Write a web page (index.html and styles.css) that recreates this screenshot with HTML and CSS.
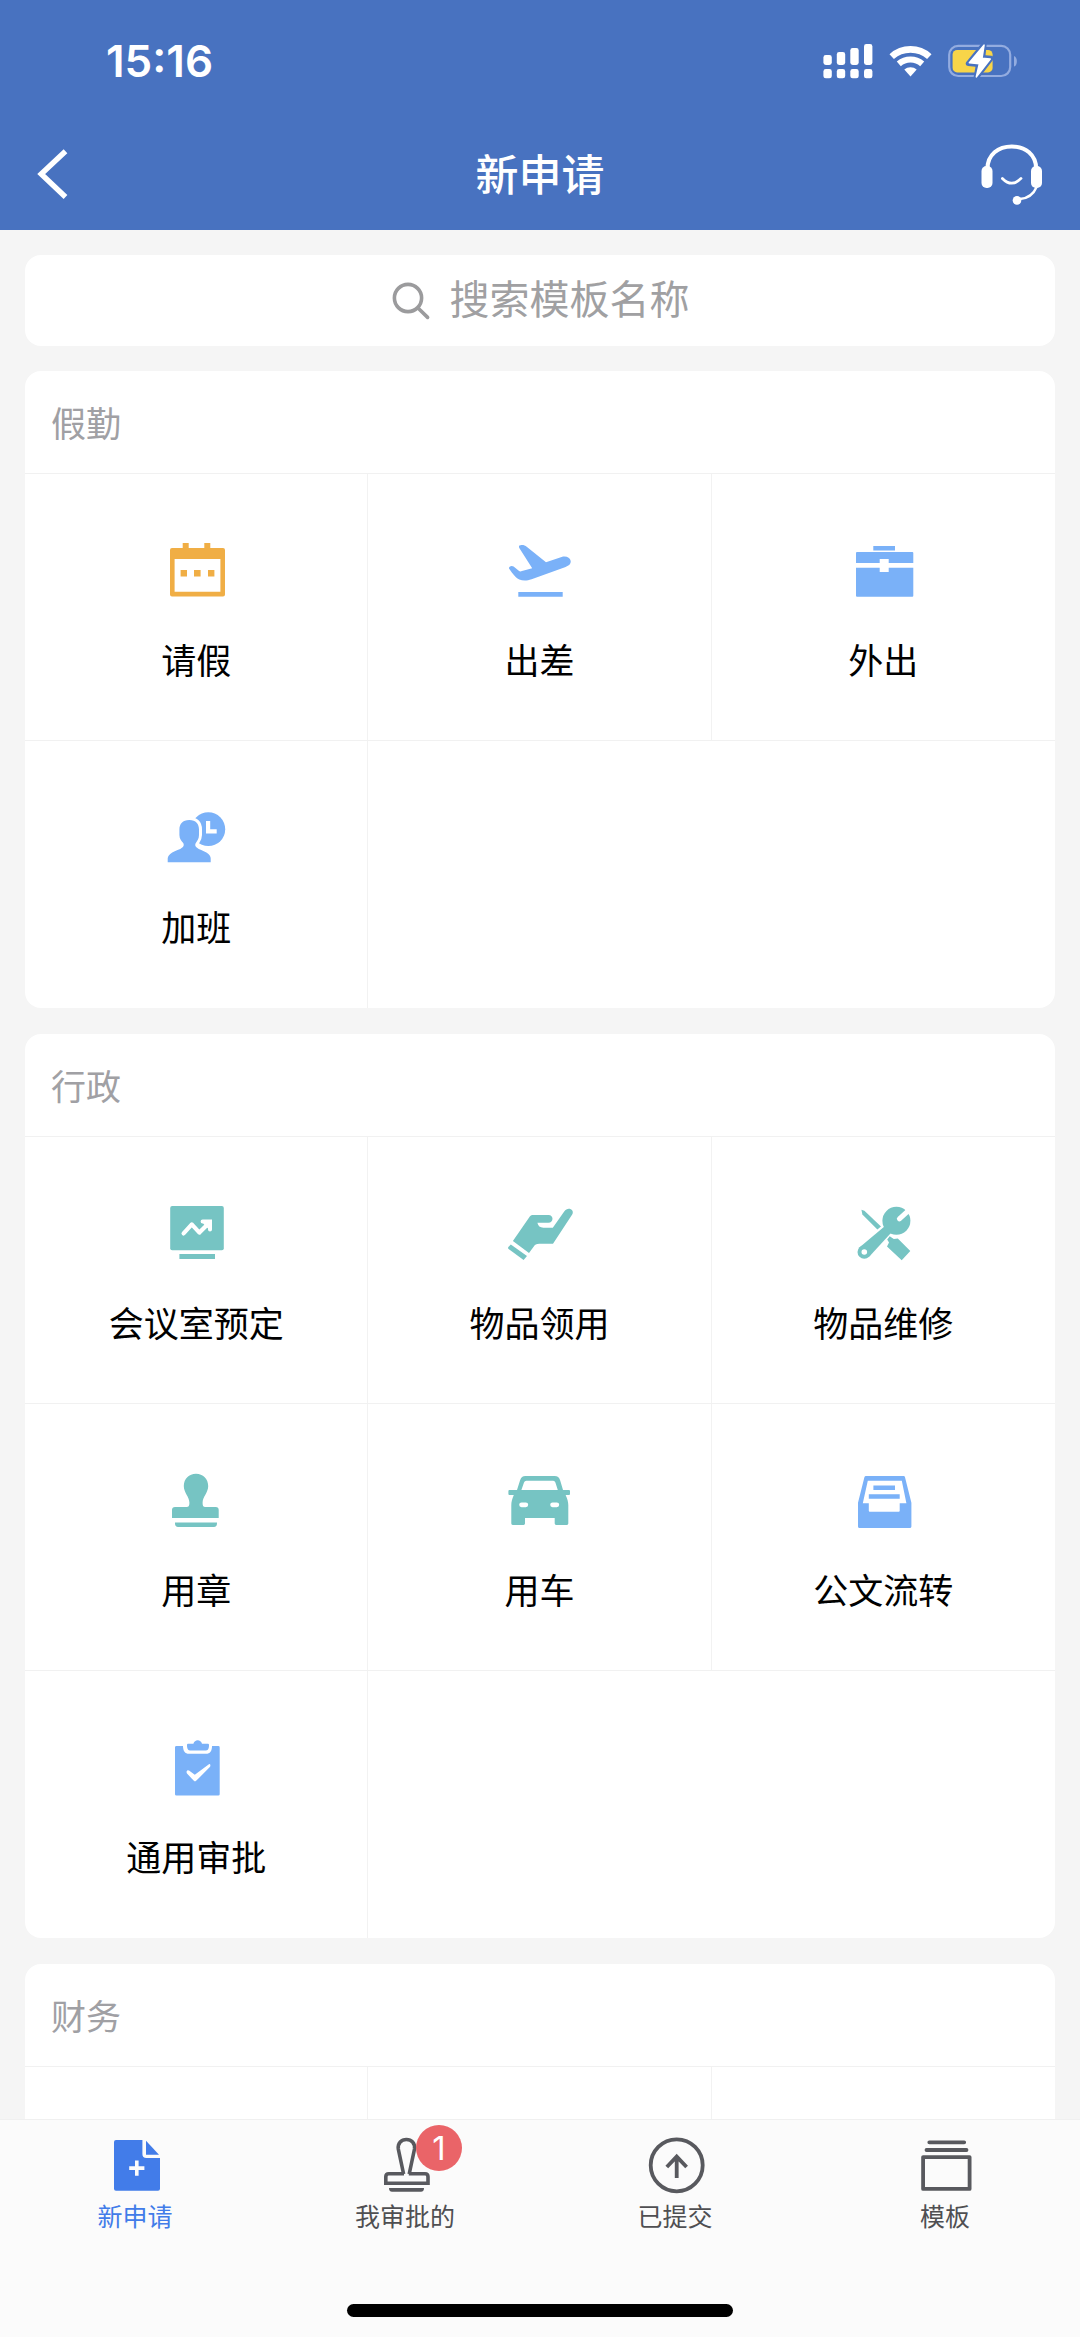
FILE: index.html
```html
<!DOCTYPE html>
<html lang="zh-CN">
<head>
<meta charset="utf-8">
<meta name="viewport" content="width=device-width, initial-scale=1">
<title>新申请</title>
<link rel="stylesheet" href="styles.css">
</head>
<body>
<header class="header">
  <div class="status">
    <span class="status-time">15:16</span>
    <div class="status-icons">
      <svg width="50" height="36" viewBox="0 0 50 36" fill="#fff" aria-hidden="true">
        <rect x="0.4" y="12" width="8.4" height="10" rx="2.4"/><rect x="13.8" y="9" width="8.4" height="13" rx="2.4"/><rect x="27.3" y="5" width="8.4" height="17" rx="2.4"/><rect x="41" y="1" width="8.4" height="21" rx="2.4"/>
        <rect x="0.4" y="26" width="8.4" height="9.3" rx="2.4"/><rect x="13.8" y="26" width="8.4" height="9.3" rx="2.4"/><rect x="27.3" y="26" width="8.4" height="9.3" rx="2.4"/><rect x="41" y="26" width="8.4" height="9.3" rx="2.4"/>
      </svg>
      <svg width="43" height="36" viewBox="0 0 43 36" aria-hidden="true">
        <path d="M2.7 13.6A28 28 0 0 1 40.3 13.6" fill="none" stroke="#fff" stroke-width="6.6"/>
        <path d="M9.8 20.8A18 18 0 0 1 33.2 20.8" fill="none" stroke="#fff" stroke-width="6.2"/>
        <path d="M15.3 26.6A9.6 9.6 0 0 1 27.7 26.6L21.5 33.6Z" fill="#fff"/>
      </svg>
      <svg width="70" height="36" viewBox="0 0 70 36" aria-hidden="true">
        <rect x="1.2" y="2.8" width="61" height="30.2" rx="9" fill="none" stroke="#93ace0" stroke-width="2.2"/>
        <path d="M66 13C69.8 14 69.8 22.6 66 23.6Z" fill="#93ace0"/>
        <rect x="4.6" y="7" width="40" height="22.4" rx="4.5" fill="#f8d549"/>
        <path d="M36.2 1L34.8 14.4L43.2 15.2L28 35L30.4 21.6L20.2 20.6Z" fill="#fff" stroke="#4872c0" stroke-width="5" stroke-linejoin="round"/>
        <path d="M36 2.2L34 15.2L42.2 16L28.4 33.8L31.4 20.8L21.4 19.8Z" fill="#fff" stroke="#fff" stroke-width="1.6" stroke-linejoin="round"/>
      </svg>
    </div>
  </div>
  <div class="navbar">
    <button class="nav-button" type="button" aria-label="返回">
      <svg width="64" height="64" viewBox="0 0 64 64" fill="none" stroke="#fff" stroke-width="5.4" aria-hidden="true"><path d="M46.5 9.2L22.2 32L46.5 55"/></svg>
    </button>
    <h1 class="title">新申请</h1>
    <button class="nav-button" type="button" aria-label="客服">
      <svg width="64" height="64" viewBox="0 0 64 64" fill="none" stroke="#fff" stroke-linecap="round" aria-hidden="true">
        <path d="M7.4 27C7.4 12.6 18.4 4.4 31.8 4.4S56.2 12.6 56.2 27" stroke-width="4"/>
        <rect x="1.5" y="24" width="11" height="22" rx="5" fill="#fff" stroke="none"/><rect x="51" y="24" width="11" height="22" rx="5" fill="#fff" stroke="none"/>
        <path d="M22.4 36.4Q31.8 46 41 36.4" stroke-width="2.8"/>
        <path d="M56.6 45Q52 56 40 57" stroke-width="2.4"/><circle cx="37" cy="58.4" r="4.3" fill="#fff" stroke="none"/>
      </svg>
    </button>
  </div>
</header>

<main class="content">
  <label class="search">
    <svg width="40" height="40" viewBox="0 0 40 40" fill="none" stroke="#9b9b9d" stroke-width="3.6" stroke-linecap="round" aria-hidden="true"><circle cx="17" cy="17" r="13.6"/><path d="M27 27L36.6 36.4"/></svg>
    <input class="search-input" type="text" placeholder="搜索模板名称" aria-label="搜索模板名称">
  </label>

  <section class="card">
    <h2 class="card-title">假勤</h2>
    <div class="grid">
      <a class="cell" href="#leave">
        <svg class="cell-icon orange" viewBox="0 0 72 72" aria-hidden="true"><path fill-rule="evenodd" d="M11 14H21.7V9H27.7V14H43.3V9H49.3V14H62Q64 14 64 16V60.5Q64 62.5 62 62.5H11Q9 62.5 9 60.5V16Q9 14 11 14ZM13.6 25V57.8H59.4V25ZM19.6 36H26V42.4H19.6ZM33 36H39.6V42.4H33ZM47 36H53.4V42.4H47Z"/></svg>
        <span>请假</span>
      </a>
      <a class="cell" href="#trip">
        <svg class="cell-icon blue" viewBox="0 0 72 72" aria-hidden="true"><path d="M15.3 14C14.4 11.6 15.8 11 18 11C20 11 21 11.4 23 13L42 28.2L57.6 23C62 21.6 66 23.4 66.7 27C67 30.4 64 32 61.6 33L27.6 45.2C20 47.8 14.6 46 11.2 42.4C8.4 39.4 6.6 37 5 34.6C4.6 32.6 7.6 31.2 9.6 32.6L14.8 36.8C15.8 37.6 16.8 37.6 18 37L28.2 34.2Z"/><path d="M14.3 58H58.7V62.7H14.3Z"/></svg>
        <span>出差</span>
      </a>
      <a class="cell" href="#out">
        <svg class="cell-icon blue" viewBox="0 0 72 72" aria-hidden="true"><path d="M25.3 12H47V16.4H25.3ZM9 18H64.3Q65.3 18 65.3 19V29H40.7V25H31.7V29H8V19Q8 18 9 18ZM8 33.7H31.7V38H40.7V33.7H65.3V61.7Q65.3 62.7 64.3 62.7H9Q8 62.7 8 61.7Z"/></svg>
        <span>外出</span>
      </a>
      <a class="cell" href="#overtime">
        <svg class="cell-icon blue" viewBox="0 0 72 72" aria-hidden="true">
          <circle cx="47.3" cy="28.2" r="16.9"/><path fill="#fff" d="M45 20H49.2V28.2H55.7V32.4H45Z"/>
          <path stroke="#fff" stroke-width="6" paint-order="stroke" d="M28.3 19C35 19 38 23 38 28.4V34C38 38 36 40 34.8 42C34 43.4 34 45 35.4 46.2C38.4 48.8 42 49.4 45.4 51.4C48.6 53.2 49.7 55.4 49.7 57.4V61.3H6.7V57.4C6.7 55.4 8.2 53.2 11.2 51.4C14.4 49.4 18.8 48.8 21.6 46.2C23 45 23 43.4 22.2 42C20.6 40 18.4 38 18.4 34V28.4C18.4 23 21.6 19 28.3 19Z"/>
        </svg>
        <span>加班</span>
      </a>
    </div>
  </section>

  <section class="card">
    <h2 class="card-title">行政</h2>
    <div class="grid">
      <a class="cell" href="#meeting-room">
        <svg class="cell-icon teal" viewBox="0 0 72 72" aria-hidden="true"><rect x="9.2" y="9" width="53.6" height="44.3" rx="2"/><rect x="18.4" y="57" width="35.6" height="5"/><path d="M22.6 36.4L30.8 27.4L38.4 35.6L48 26" fill="none" stroke="#fff" stroke-width="4.2" stroke-linecap="round" stroke-linejoin="round"/><path d="M41.6 24.6H49V32.6M43 24.6L49 30.6" fill="none" stroke="#fff" stroke-width="4" stroke-linecap="round"/></svg>
        <span>会议室预定</span>
      </a>
      <a class="cell" href="#supplies">
        <svg class="cell-icon teal" viewBox="0 0 72 72" aria-hidden="true"><path d="M29.6 18H44.4C50 18 49.8 25.6 44.4 25.8H33.4C34 29 36 30.7 39.4 30.7H48.8L60.2 14.4C64 8.8 71 12.8 68.2 17.4L49 46.7H35.4C32 46.7 31 47.6 29.8 49.4L25 56L8.9 44L25.8 19.6C26.8 18.4 27.8 18 29.6 18Z"/><path d="M6.8 47.4L23 59L19.6 63L4.6 52Q3.6 51 4.4 50Z"/></svg>
        <span>物品领用</span>
      </a>
      <a class="cell" href="#repair">
        <svg class="cell-icon teal" viewBox="0 0 72 72" aria-hidden="true">
          <path d="M13.4 12.8L16.4 13.8L33 29.4L29.4 32.4L14.4 17.6Z"/>
          <circle cx="48.4" cy="23.8" r="14"/>
          <path d="M37 29L43.4 35.4L21.4 59.6L11.4 50.4Z"/>
          <circle cx="16.3" cy="55" r="6.8"/>
          <circle cx="16.3" cy="55" r="2.8" fill="#fff"/>
          <path d="M51.4 21.8L63.5 10.8" fill="none" stroke="#fff" stroke-width="5" stroke-linecap="round"/>
          <path d="M41.7 39.2L45.8 42L49.8 41.4L62.3 54L53.7 63.2L39 49.4L41 45.4L39.2 42.6Z"/>
        </svg>
        <span>物品维修</span>
      </a>
      <a class="cell" href="#seal">
        <svg class="cell-icon teal" viewBox="0 0 72 72" aria-hidden="true"><path d="M35 9.8C42 9.8 47.2 15 47.2 22C47.2 28.6 41.6 33 41.6 38.4C41.6 41.4 42 43 45 43H54.7Q57.7 43 57.7 46V54H11V46Q11 43 14 43H25C28 43 28.4 41.4 28.4 38.4C28.4 33 22.8 28.6 22.8 22C22.8 15 28 9.8 35 9.8ZM14 58.4H56C56 62 55 63 53 63H17C15 63 14 62 14 58.4Z"/></svg>
        <span>用章</span>
      </a>
      <a class="cell" href="#car">
        <svg class="cell-icon teal" viewBox="0 0 72 72" aria-hidden="true"><path fill-rule="evenodd" d="M13 26L16 16.4C17 13.4 18.6 12 21.4 12H50.6C53.4 12 55.4 13.4 56.2 16.4L59 26H65Q66 26 66 27V30Q66 31 65 31H61.6C63.4 34.6 64.3 38.4 64.3 41V59.6Q64.3 61 62.9 61H52.1Q50.7 61 50.7 59.6V54H21V59.6Q21 61 19.6 61H8.7Q7.3 61 7.3 59.6V41C7.3 38.4 8.2 34.6 9.8 31H5.4Q4.4 31 4.4 30V27Q4.4 26 5.4 26ZM17.4 26H53.8L51.4 18.4Q50.8 16.7 49.2 16.7H22.4Q20.6 16.7 20 18.4ZM17.6 38.4A2.4 2.4 0 0 0 17.6 43.2H21.8A2.4 2.4 0 0 0 21.8 38.4ZM48.6 38.4A2.4 2.4 0 0 0 48.6 43.2H52.8A2.4 2.4 0 0 0 52.8 38.4Z"/></svg>
        <span>用车</span>
      </a>
      <a class="cell" href="#documents">
        <svg class="cell-icon blue" viewBox="0 0 72 72" aria-hidden="true"><path fill-rule="evenodd" d="M18 12H55.6Q56.8 12 57 13.2L63.4 38.7V62.4Q63.4 64 61.8 64H11.6Q10 64 10 62.4V38.7L16.4 13.2Q16.8 12 18 12ZM19.8 16.7L14.8 39.3H20.8V46.7Q20.8 47.7 21.8 47.7H50.7Q51.7 47.7 51.7 46.7V39.3H58.4L53.8 16.7Z"/><path d="M25.4 21.4H47V26H25.4ZM20.8 30.2H51.7V34.7H20.8Z"/></svg>
        <span>公文流转</span>
      </a>
      <a class="cell" href="#general">
        <svg class="cell-icon blue" viewBox="0 0 72 72" aria-hidden="true"><path d="M15.4 15H22C22 20 24 22.8 28 22.8H45C49 22.8 51 20 51 15H57.3Q58.7 15 58.7 16.4V63.2Q58.7 64.6 57.3 64.6H15.4Q14 64.6 14 63.2V16.4Q14 15 15.4 15Z"/><path d="M27 12.7H32.4C33.4 8 40 8 41 12.7H47Q48 12.7 48 14C48 18 47 19.6 44 19.6H30C27 19.6 26 18 26 14Q26 12.7 27 12.7Z"/><path fill="#fff" d="M25.6 40.4Q26.4 38.6 28 39.6L33.8 43.8L47.6 33.4Q49.2 32.4 49.4 34.4Q49.4 35.4 48.6 36.2L35.4 49.6Q34 51.2 32.6 49.6L26 42.4Q25.4 41.6 25.6 40.4Z"/></svg>
        <span>通用审批</span>
      </a>
    </div>
  </section>

  <section class="card">
    <h2 class="card-title">财务</h2>
    <div class="grid">
      <div class="cell"></div>
      <div class="cell"></div>
      <div class="cell"></div>
    </div>
  </section>
</main>

<footer class="footer">
  <nav class="tabs">
    <a class="tab active" href="#new" aria-current="page">
      <svg class="tab-icon" viewBox="0 0 64 64" aria-hidden="true"><path fill="#427ce9" fill-rule="evenodd" d="M13 7H39.4V21Q39.4 25 43.4 25H57V55.8Q57 57.7 55 57.7H13Q11 57.7 11 55.8V9Q11 7 13 7ZM32 27.4V33.2H26.2V37H32V42.8H35.6V37H41.4V33.2H35.6V27.4Z"/><path fill="#427ce9" d="M43 7.8L56 21.7H43Z"/></svg>
      <span>新申请</span>
    </a>
    <a class="tab" href="#approve">
      <span class="tab-figure">
        <svg class="tab-icon" viewBox="0 0 64 64" fill="none" stroke="#58595e" stroke-width="3.6" aria-hidden="true"><path d="M30.6 41L25.3 16C24.6 10 28.4 6.5 33.4 6.5S42.2 10 41.5 16L36.2 41M31 40.7H15.8Q12.8 40.7 12.8 43.7V50.3H55V43.7Q55 40.7 52 40.7H35.8"/><path fill="#58595e" stroke="none" d="M16 55H51C51 57.6 50 58.7 48 58.7H19C17 58.7 16 57.6 16 55Z"/></svg>
        <span class="badge">1</span>
      </span>
      <span>我审批的</span>
    </a>
    <a class="tab" href="#submitted">
      <svg class="tab-icon" viewBox="0 0 64 64" fill="none" stroke="#58595e" stroke-width="3.8" aria-hidden="true"><circle cx="33.7" cy="32.3" r="26"/><path d="M33.7 45V24M23.8 34L33.7 23.6L43.6 34"/></svg>
      <span>已提交</span>
    </a>
    <a class="tab" href="#templates">
      <svg class="tab-icon" viewBox="0 0 64 64" fill="none" stroke="#58595e" stroke-width="3.8" stroke-linecap="round" stroke-linejoin="round" aria-hidden="true"><path d="M16.3 9.3H51.2M13.5 17H53.5"/><rect x="10.1" y="24.1" width="46.5" height="31.8"/></svg>
      <span>模板</span>
    </a>
  </nav>
  <div class="home-indicator"></div>
</footer>
</body>
</html>
```
FILE: styles.css
```css
* {
  box-sizing: border-box;
}

body {
  margin: 0;
  height: 100vh;
  display: flex;
  flex-direction: column;
  background: #f5f5f5;
  color: #000;
  font-family: "Noto Sans CJK SC", sans-serif;
}

a {
  color: inherit;
  text-decoration: none;
}

svg {
  display: block;
  flex: none;
}

/* Header */
.header {
  flex: none;
  background: #4872c0;
  color: #fff;
}

.status {
  display: flex;
  align-items: center;
  justify-content: space-between;
  height: 118px;
  padding: 4px 62px 0 106px;
}

.status-time {
  font: 600 44px/52px Inter, sans-serif;
}

.status-icons {
  display: flex;
  gap: 16px;
}

.navbar {
  display: flex;
  align-items: center;
  justify-content: space-between;
  height: 112px;
  padding: 0 36px 0 19px;
}

.nav-button {
  padding: 0;
  border: 0;
  background: none;
}

.title {
  flex: 1;
  margin: 0;
  padding: 0 0 4px 17px;
  text-align: center;
  font-size: 43px;
  font-weight: 500;
  line-height: 64px;
}

/* Scrolling content */
.content {
  flex: 1;
  min-height: 0;
  overflow-y: auto;
  scrollbar-width: none;
  padding: 25px 25px 0;
}

.search {
  display: flex;
  align-items: center;
  justify-content: center;
  gap: 19px;
  height: 91px;
  margin-bottom: 25px;
  border-radius: 16px;
  background: #fff;
}

.search-input {
  width: 6em;
  height: 68px;
  padding: 0 0 8px;
  border: 0;
  outline: 0;
  background: none;
  font: 400 40px/60px "Noto Sans CJK SC", sans-serif;
}

.search-input::placeholder {
  color: #a0a0a2;
  opacity: 1;
}

.card {
  margin-bottom: 26px;
  overflow: hidden;
  border-radius: 16px;
  background: #fff;
}

.card-title {
  margin: 0;
  padding: 25px 26px;
  border-bottom: 1px solid #f1f1f1;
  color: #a0a0a4;
  font-size: 35px;
  font-weight: 400;
  line-height: 52px;
}

.grid {
  display: grid;
  grid-template-columns: repeat(3, 1fr);
}

.cell {
  display: flex;
  flex-direction: column;
  align-items: center;
  gap: 27px;
  min-height: 267px;
  padding-top: 60px;
  border-right: 1px solid #f2f2f2;
  border-bottom: 1px solid #f1f1f1;
  font-size: 35px;
  line-height: 52px;
}

.cell:nth-child(3n) {
  border-right: 0;
}

.cell:last-child {
  border-bottom: 0;
}

.cell-icon {
  width: 72px;
  height: 72px;
  margin-left: 2px;
}

.orange {
  fill: #f0ae45;
}

.blue {
  fill: #7ab1f8;
}

.teal {
  fill: #76c4c3;
}

/* Bottom tabs */
.footer {
  flex: none;
  padding-bottom: 20px;
  border-top: 1px solid #f0f0f0;
  background: #fbfbfb;
}

.tabs {
  display: grid;
  grid-template-columns: repeat(4, 1fr);
  height: 184px;
}

.tab {
  display: flex;
  flex-direction: column;
  align-items: center;
  padding-top: 13px;
  color: #4f4f52;
  font-size: 25px;
  line-height: 36px;
}

.tab.active {
  color: #427ce9;
}

.tab-icon {
  width: 64px;
  height: 64px;
}

.tab-figure {
  position: relative;
}

.badge {
  position: absolute;
  top: -8px;
  left: 43px;
  width: 46px;
  height: 46px;
  border-radius: 50%;
  background: #ea6468;
  color: #fff;
  text-align: center;
  font: 400 33px/46px Inter, sans-serif;
}

.home-indicator {
  width: 386px;
  height: 13px;
  margin: 0 auto;
  border-radius: 7px;
  background: #000;
}
```
